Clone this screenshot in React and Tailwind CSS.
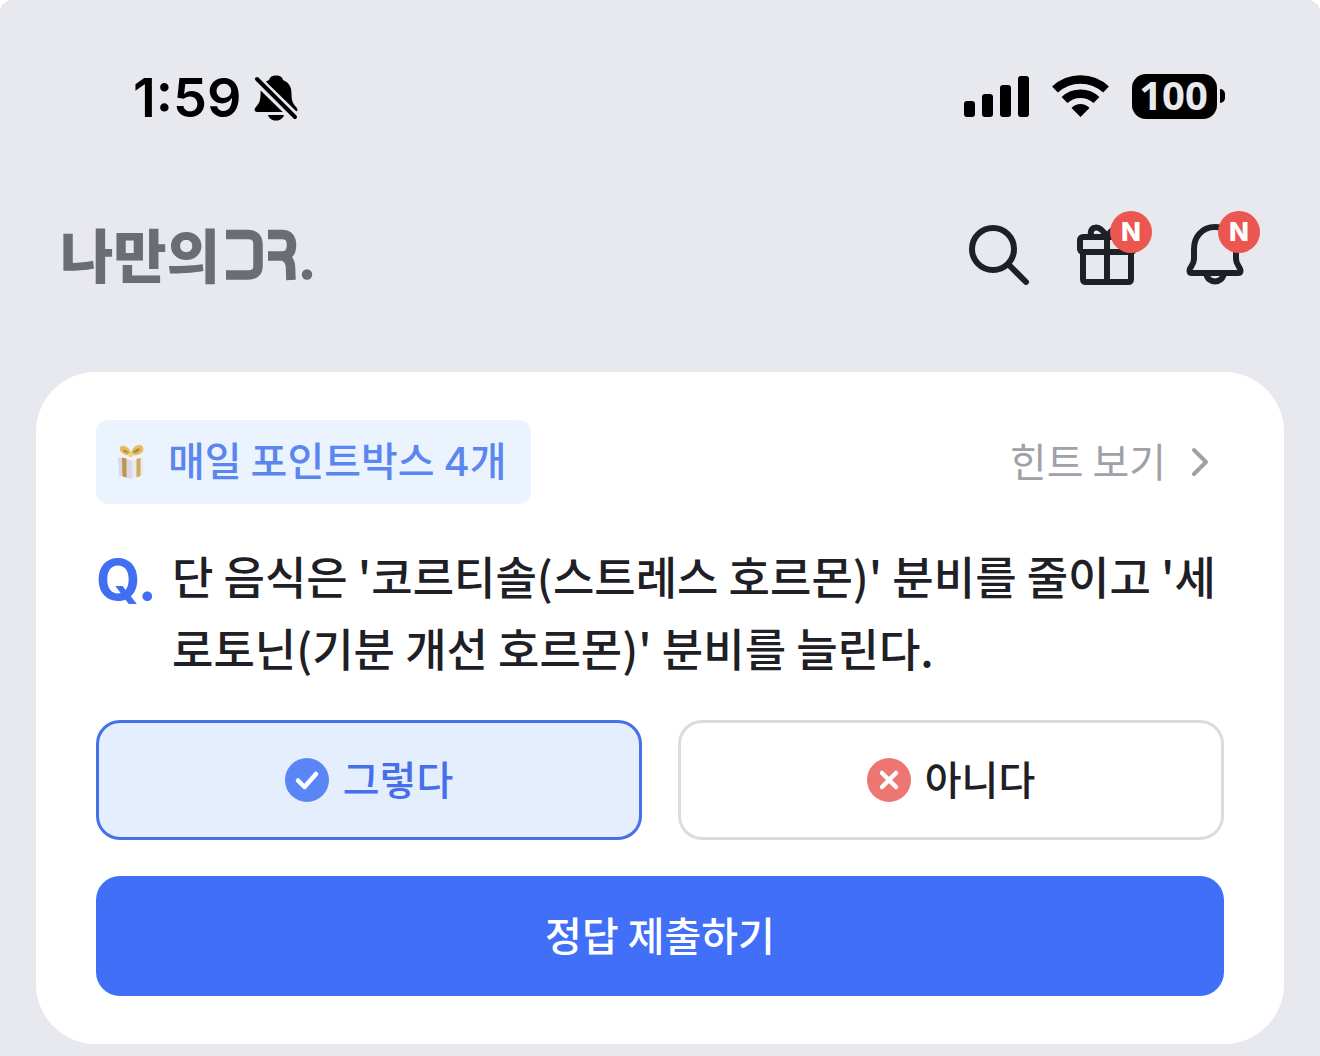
const N = () => (
  <span className="absolute -top-2 left-[38px] flex size-[42px] items-center justify-center rounded-full bg-[#eb5750] font-[Inter,sans-serif] text-[26px] leading-none font-extrabold text-white">N</span>
);

function StatusBar() {
  return (
    <div className="flex h-[62px] items-center justify-between pr-[95px] pl-[133px] text-black">
      <div className="flex items-center gap-3">
        <span className="font-[Inter,sans-serif] text-[54px] leading-[62px] font-semibold">1:59</span>
        <svg className="h-[46px] w-[44px]" viewBox="0 0 44 46" aria-label="Silent mode" role="img">
          <path d="M22 .5c-4.200 0-6.500 2-7 4.500C8 8 6.500 13 6.500 19c0 8-2 10-5 13.500C-.5 35 1 37 3 37h38c2 0 3.500-2 1.500-4.500-3-3.500-5-5.500-5-13.500 0-6-1.500-11-8.500-14-.5-2.500-2.800-4.500-7-4.500zM14 40h16c-1 3.500-4 5.500-8 5.500s-7-2-8-5.500z" />
          <path d="M0 2L44 45" stroke="#e8e9ee" strokeWidth="10" />
          <path d="M3 4L41 42" stroke="#000" strokeWidth="4" strokeLinecap="round" />
        </svg>
      </div>
      <div className="flex items-center pb-1">
        <svg className="h-[41px] w-[65px]" viewBox="0 0 65 41" aria-label="Signal" role="img">
          <rect y="25" width="11" height="16" rx="3" />
          <rect x="18" y="18" width="11" height="23" rx="3" />
          <rect x="36" y="9" width="11" height="32" rx="3" />
          <rect x="54" width="11" height="41" rx="3" />
        </svg>
        <svg className="ml-[23px] h-[42px] w-[57px]" viewBox="0 0 57 42" fill="none" aria-label="Wi-Fi" role="img">
          <path d="M3 14.500A37.500 37.500 0 0 1 54 14.500" stroke="#000" strokeWidth="8.500" />
          <path d="M12.500 25A23.500 23.500 0 0 1 44.500 25" stroke="#000" strokeWidth="8.500" />
          <path d="M19.500 33C24.500 27.500 32.500 27.500 37.500 33L28.500 42Z" fill="#000" />
        </svg>
        <div className="ml-[23px] flex h-[45px] w-[85px] items-center justify-center rounded-[14px] bg-black pr-0.5 pb-0.5 font-['Noto_Sans',sans-serif] text-[40px] leading-none font-bold text-[#e8e9ee]">100</div>
        <span className="ml-[3px] h-[14px] w-[5px] rounded-r-full bg-black" />
      </div>
    </div>
  );
}

function Header() {
  return (
    <header className="mt-[88px] flex h-[76px] items-center justify-between pr-[68px] pl-[60px]">
      <a href="#home" aria-label="나만의 DR." className="flex items-center text-[#6b6d74]">
        <span className="pb-1 text-[58px] leading-[76px] font-black">나만의</span>
        <svg className="ml-1.5 h-[52px] w-[87px]" viewBox="0 0 87 52" fill="none" aria-hidden="true">
          <path d="M0 5.500H22Q32 5.500 32 15.500V37Q32 46 22 46H0" stroke="currentColor" strokeWidth="9.500" />
          <path d="M42 5.500H56Q65.500 5.500 65.500 16T56 27H42M56 27Q64 29 64.500 38L65 51" stroke="currentColor" strokeWidth="9.500" />
          <circle cx="81" cy="45.500" r="5.200" fill="currentColor" />
        </svg>
      </a>
      <nav className="flex items-center gap-9 text-[#1e2025]">
        <button aria-label="검색" className="size-[72px]">
          <svg viewBox="0 0 72 72" fill="none" stroke="currentColor" strokeWidth="6" strokeLinecap="round">
            <circle cx="29" cy="30" r="21" />
            <path d="M45 46L62 63" />
          </svg>
        </button>
        <button aria-label="선물" className="relative size-[72px]">
          <svg viewBox="0 0 72 72" fill="none" stroke="currentColor" strokeWidth="6" strokeLinejoin="round">
            <rect x="8" y="18" width="54" height="15" rx="3" />
            <path d="M11 33V60Q11 63 14 63H56Q59 63 59 60V33M35 18V63M35 18C31 11 27 8 23.500 8.500 19 9 17.500 14 20 18M35 18C39 11 43 8 46.500 8.500 51 9 52.500 14 50 18" />
          </svg>
          <N />
        </button>
        <button aria-label="알림" className="relative size-[72px]">
          <svg viewBox="0 0 72 72" fill="none" stroke="currentColor" strokeWidth="6" strokeLinejoin="round">
            <path d="M35 8C21 8 14 19 14 30V40C14 46 9.500 48 9.500 51.500Q9.500 54 12 54H58Q60.500 54 60.500 51.500C60.500 48 56 46 56 40V30C56 19 49 8 35 8ZM26 54C27 60 31 62.500 35 62.500S43 60 44 54" />
          </svg>
          <N />
        </button>
      </nav>
    </header>
  );
}

function GiftIcon() {
  return (
    <svg className="h-9 w-[27px]" viewBox="0 0 27 36" aria-hidden="true">
      <path d="M1 13L15 16V35L2 31.500Z" fill="#d8d8e6" />
      <path d="M15 16L26 13V31L15 35Z" fill="#e9e9f4" />
      <path d="M1 13L12 10L26 13L15 16.500Z" fill="#f3f3fa" />
      <path d="M5 13.500L9.500 14.500V33.500L5.500 32.300Z" fill="#bd9648" />
      <path d="M19.500 15L23.500 14V32L19.500 33.500Z" fill="#cfab58" />
      <path d="M14 11C10 12 4 10 3 6C2 2 5 1 8 2C11 3 13 6 14 9C15 5 18 1 22 1C26 1 27 4 26 7C24 11 18 12 14 11Z" fill="#e3bd5c" />
      <path d="M12 9C10 7 8 5 6 5.500C6 8 9 9.500 12 9ZM16 9C17 6 20 4 23 4.500C23 7 19 9.500 16 9Z" fill="#b08a3c" />
      <path d="M11 10L14 8L17 10L15 13H12Z" fill="#f0d27c" />
    </svg>
  );
}

function Answer({ label, value, checked, children, className, textClass }) {
  return (
    <label className={"flex h-[120px] flex-1 cursor-pointer items-center justify-center gap-[14px] rounded-3xl border-3 " + className}>
      <input type="radio" name="answer" value={value} defaultChecked={checked} className="sr-only" />
      {children}
      <span className={"pb-1 text-[40px] leading-[60px] font-medium " + textClass}>{label}</span>
    </label>
  );
}

export default function App() {
  return (
    <div className="min-h-screen rounded-t-xl bg-[#e8e9ee] pt-[67px] pb-3 font-['Noto_Sans_CJK_KR',sans-serif]">
      <StatusBar />
      <Header />
      <main className="mx-9 mt-[79px] rounded-[60px] bg-white px-[60px] py-12">
        <div className="flex items-center justify-between">
          <div className="flex h-[84px] items-center gap-6 rounded-xl bg-[#ebf4fe] pr-6 pl-[21px]">
            <GiftIcon />
            <span className="pb-1 text-[40px] leading-[60px] font-medium text-[#5a86ee]">매일 포인트박스 <span className="font-[Inter,sans-serif]">4</span>개</span>
          </div>
          <button className="flex items-center gap-6 pr-[14px] text-[40px] leading-[60px] text-[#a0a1a7]">
            <span className="pb-1">힌트 보기</span>
            <svg className="h-[30px] w-5" viewBox="0 0 20 30" fill="none" stroke="currentColor" strokeWidth="4" strokeLinecap="round" strokeLinejoin="round" aria-hidden="true">
              <path d="M4 3L16 15L4 27" />
            </svg>
          </button>
        </div>
        <div className="mt-9 flex">
          <h2 className="w-19 font-[Inter,sans-serif] text-[57px] leading-20 font-bold text-[#416ff4]">Q.</h2>
          <p className="flex-1 text-[45px] leading-18 font-medium whitespace-nowrap text-[#1e2025]">
            단 음식은 '코르티솔(스트레스 호르몬)' 분비를 줄이고 '세<br />로토닌(기분 개선 호르몬)' 분비를 늘린다.
          </p>
        </div>
        <div className="mt-9 flex gap-9">
          <Answer label="그렇다" value="yes" checked className="border-[#466fe8] bg-[#e4eefd]" textClass="text-[#466fe8]">
            <svg className="size-11" viewBox="0 0 44 44" fill="none" aria-hidden="true">
              <circle cx="22" cy="22" r="22" fill="#5a86f5" />
              <path d="M13 22.500L19.500 29L31 16" stroke="#fff" strokeWidth="4.500" strokeLinecap="round" strokeLinejoin="round" />
            </svg>
          </Answer>
          <Answer label="아니다" value="no" className="border-[#dcdce0] bg-white" textClass="text-[#1e2025]">
            <svg className="size-11" viewBox="0 0 44 44" fill="none" aria-hidden="true">
              <circle cx="22" cy="22" r="22" fill="#ee7672" />
              <path d="M15 15L29 29M29 15L15 29" stroke="#fff" strokeWidth="4.500" strokeLinecap="round" />
            </svg>
          </Answer>
        </div>
        <button className="mt-9 h-[120px] w-full rounded-3xl bg-[#416ff7] pb-1 text-[40px] leading-[60px] font-medium text-white">정답 제출하기</button>
      </main>
    </div>
  );
}
